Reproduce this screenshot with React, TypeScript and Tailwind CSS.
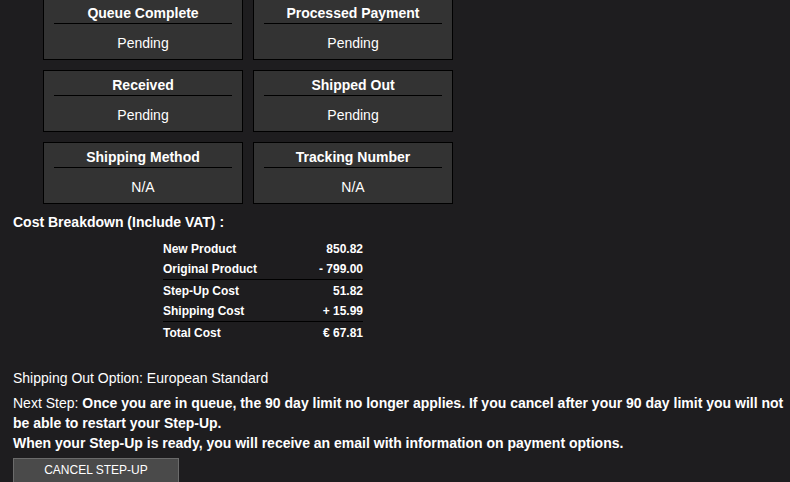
const statusCards = [
  { title: 'Queue Complete', value: 'Pending' },
  { title: 'Processed Payment', value: 'Pending' },
  { title: 'Received', value: 'Pending' },
  { title: 'Shipped Out', value: 'Pending' },
  { title: 'Shipping Method', value: 'N/A' },
  { title: 'Tracking Number', value: 'N/A' },
]

const costRows = [
  { label: 'New Product', value: '850.82', line: false },
  { label: 'Original Product', value: '- 799.00', line: true },
  { label: 'Step-Up Cost', value: '51.82', line: false },
  { label: 'Shipping Cost', value: '+ 15.99', line: true },
  { label: 'Total Cost', value: '€ 67.81', line: false },
]

function StatusCard({ title, value }: { title: string; value: string }) {
  return (
    <div className="h-[62px] border border-black bg-[#333333] text-center text-white">
      <div className="mx-[10px] border-b border-black pt-[5px] pb-[1px] text-[14px] font-bold leading-[18px]">
        {title}
      </div>
      <div className="mt-[10px] text-[14px] leading-[18px]">{value}</div>
    </div>
  )
}

export default function App() {
  return (
    <div
      className="h-[482px] w-[790px] overflow-hidden bg-[#1e1d1f] text-white"
      style={{ fontFamily: '"Liberation Sans", Arial, sans-serif' }}
    >
      <div className="-mt-[2px] grid grid-cols-[200px_200px] gap-[10px] pl-[43px]">
        {statusCards.map((c) => (
          <StatusCard key={c.title} title={c.title} value={c.value} />
        ))}
      </div>

      <div className="pl-[13px]">
        <h3 className="mt-[10px] text-[14px] font-bold leading-[16px]">
          Cost Breakdown (Include VAT) :
        </h3>

        <div className="mt-[8px] ml-[150px] w-[200px]">
          {costRows.map((r) => (
            <div
              key={r.label}
              className={`flex h-[21px] items-center justify-between text-[12px] font-bold ${
                r.line ? 'border-b border-black' : ''
              }`}
            >
              <span>{r.label}</span>
              <span>{r.value}</span>
            </div>
          ))}
        </div>

        <p className="mt-[25px] text-[14px] leading-[20px]">
          Shipping Out Option: European Standard
        </p>

        <p className="mt-[5px] text-[14px] leading-[20px]">
          Next Step:{' '}
          <b>
            Once you are in queue, the 90 day limit no longer applies. If you cancel after your 90
            day limit you will not be able to restart your Step-Up.
            <br />
            When your Step-Up is ready, you will receive an email with information on payment
            options.
          </b>
        </p>

        <button className="mt-[5px] h-[26px] w-[166px] border border-[#6b6b6b] bg-[#4a4a4a] pb-[2px] text-[12px] uppercase text-white">
          Cancel Step-Up
        </button>
      </div>
    </div>
  )
}
